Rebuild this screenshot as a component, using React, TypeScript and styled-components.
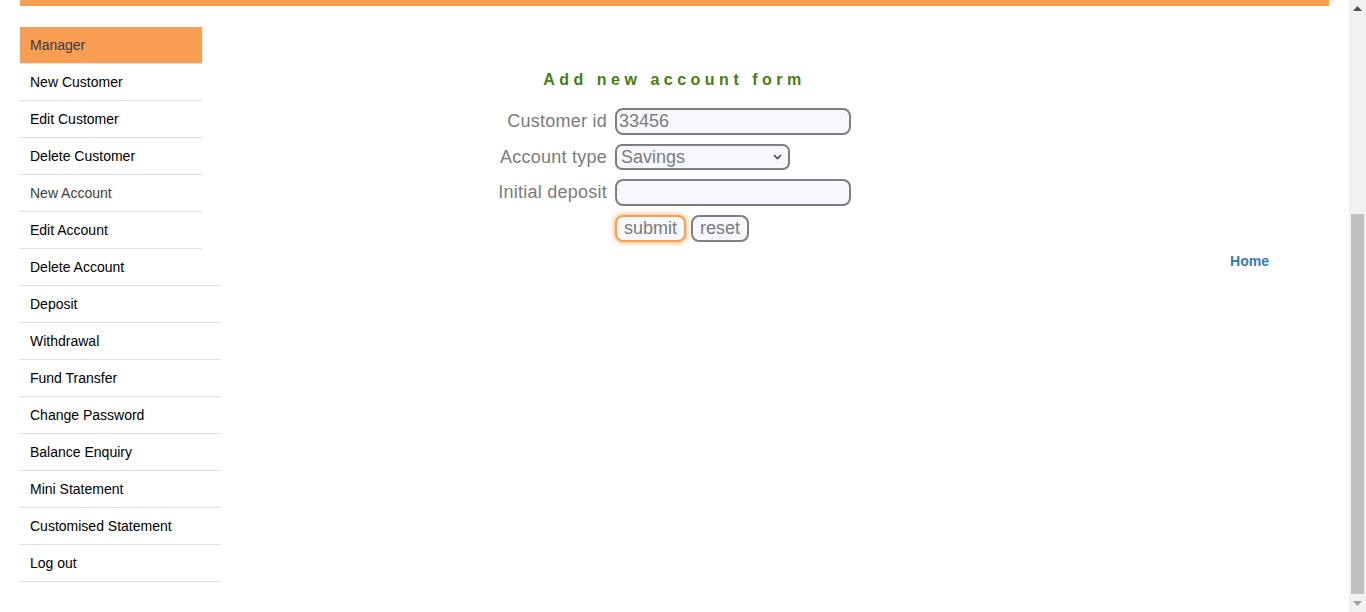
import React from 'react'
import styled, { createGlobalStyle } from 'styled-components'

const ORANGE = '#f99d52'
const FIELD_BG = '#f6f8fe'
const FIELD_BORDER = '#7f7f7f'
const GRAY_TEXT = '#7b7b7b'

const GlobalStyle = createGlobalStyle`
  html, body {
    margin: 0;
    padding: 0;
    background: #ffffff;
  }
  body {
    font-family: 'Liberation Sans', Arial, Helvetica, sans-serif;
  }
`

const Frame = styled.div`
  display: flex;
  height: 612px;
  overflow: hidden;
  background: #ffffff;
`

const Page = styled.div`
  flex: 1;
  min-width: 0;
  padding: 0 20px;
`

const TopBar = styled.div`
  height: 6px;
  background: ${ORANGE};
`

const Body = styled.div`
  display: flex;
  margin-top: 21px;
`

const Sidebar = styled.nav`
  width: 200px;
  flex-shrink: 0;
  display: flex;
  flex-direction: column;
  align-items: flex-start;
`

const MenuHead = styled.div`
  box-sizing: border-box;
  width: 182px;
  height: 37px;
  padding: 0 0 1px 10px;
  display: flex;
  align-items: center;
  background: ${ORANGE};
  border-bottom: 1px solid #e0e0e0;
  color: #3a3a3a;
  font-size: 14px;
`

const MenuLink = styled.a<{ $wide?: boolean; $muted?: boolean }>`
  box-sizing: border-box;
  width: ${({ $wide }) => ($wide ? '200px' : '182px')};
  height: 37px;
  padding-left: 10px;
  display: flex;
  align-items: center;
  border-bottom: 1px solid #e0e0e0;
  color: ${({ $muted }) => ($muted ? '#404040' : '#000000')};
  font-size: 14px;
  text-decoration: none;
  cursor: pointer;
`

const Main = styled.main`
  flex: 1;
  min-width: 0;
  display: flex;
  flex-direction: column;
`

const FormArea = styled.section`
  margin-right: 200px;
  padding-top: 44px;
  display: flex;
  flex-direction: column;
  align-items: center;
`

const Title = styled.h2`
  margin: 0 0 19px 0;
  font-size: 16px;
  line-height: 18px;
  font-weight: bold;
  letter-spacing: 4.5px;
  color: #4a7c10;
`

const FormGrid = styled.form`
  display: grid;
  grid-template-columns: 109px 236px;
  column-gap: 8px;
  row-gap: 9px;
  align-items: center;
`

const Label = styled.label`
  justify-self: end;
  white-space: nowrap;
  font-size: 18px;
  letter-spacing: 0.25px;
  color: ${GRAY_TEXT};
`

const TextInput = styled.input`
  box-sizing: border-box;
  justify-self: start;
  width: 236px;
  height: 27px;
  padding: 0 2px;
  border: 2px solid ${FIELD_BORDER};
  border-radius: 8px;
  background: ${FIELD_BG};
  font-family: inherit;
  font-size: 18px;
  color: ${GRAY_TEXT};
  outline: none;
`

const SelectWrap = styled.div`
  position: relative;
  justify-self: start;
  width: 175px;
  height: 26px;
`

const Select = styled.select`
  box-sizing: border-box;
  width: 100%;
  height: 100%;
  padding: 0 20px 0 4px;
  border: 2px solid ${FIELD_BORDER};
  border-radius: 7px;
  background: ${FIELD_BG};
  font-family: inherit;
  font-size: 18px;
  color: ${GRAY_TEXT};
  appearance: none;
  outline: none;
`

const Chevron = styled.svg`
  position: absolute;
  right: 8px;
  top: 10px;
  pointer-events: none;
`

const ButtonRow = styled.div`
  grid-column: 2;
  display: flex;
  gap: 5px;
`

const Button = styled.button<{ $focused?: boolean }>`
  box-sizing: border-box;
  height: 27px;
  padding: 0 7px;
  border: 2px solid ${({ $focused }) => ($focused ? '#f9a04e' : FIELD_BORDER)};
  border-radius: 8px;
  background: ${FIELD_BG};
  box-shadow: ${({ $focused }) => ($focused ? '0 0 5px 1px rgba(249, 160, 78, 0.75)' : 'none')};
  font-family: inherit;
  font-size: 18px;
  line-height: 21px;
  color: ${GRAY_TEXT};
  cursor: pointer;
`

const HomeRow = styled.div`
  margin-top: 10px;
  padding-right: 60px;
  text-align: right;
`

const HomeLink = styled.a`
  font-size: 14px;
  line-height: 16px;
  font-weight: bold;
  color: #337ab7;
  text-decoration: none;
`

const ScrollTrack = styled.div`
  width: 17px;
  flex-shrink: 0;
  display: flex;
  flex-direction: column;
  background: #f1f1f1;
`

const ScrollButton = styled.div`
  height: 17px;
  display: flex;
  align-items: center;
  justify-content: center;
`

const ScrollGutter = styled.div`
  flex: 1;
  display: flex;
  flex-direction: column;
  justify-content: flex-end;
  padding: 0 2px 1px 2px;
`

const ScrollThumb = styled.div`
  height: 380px;
  background: #c1c1c1;
`

const topMenu = ['New Customer', 'Edit Customer', 'Delete Customer', 'New Account', 'Edit Account']
const bottomMenu = [
  'Delete Account',
  'Deposit',
  'Withdrawal',
  'Fund Transfer',
  'Change Password',
  'Balance Enquiry',
  'Mini Statement',
  'Customised Statement',
  'Log out'
]

export default function App() {
  return (
    <>
      <GlobalStyle />
      <Frame>
        <Page>
          <TopBar />
          <Body>
            <Sidebar>
              <MenuHead>Manager</MenuHead>
              {topMenu.map(item => (
                <MenuLink key={item} $muted={item === 'New Account'}>
                  {item}
                </MenuLink>
              ))}
              {bottomMenu.map(item => (
                <MenuLink key={item} $wide>
                  {item}
                </MenuLink>
              ))}
            </Sidebar>

            <Main>
              <FormArea>
                <Title>Add new account form</Title>
                <FormGrid onSubmit={e => e.preventDefault()}>
                  <Label htmlFor="cusid">Customer id</Label>
                  <TextInput id="cusid" defaultValue="33456" />

                  <Label htmlFor="acctype">Account type</Label>
                  <SelectWrap>
                    <Select id="acctype" defaultValue="Savings">
                      <option>Savings</option>
                      <option>Current</option>
                    </Select>
                    <Chevron width="9" height="6" viewBox="0 0 9 6">
                      <path d="M1 1 L4.5 4.5 L8 1" fill="none" stroke="#4a4a4a" strokeWidth="1.6" />
                    </Chevron>
                  </SelectWrap>

                  <Label htmlFor="inideposit">Initial deposit</Label>
                  <TextInput id="inideposit" />

                  <ButtonRow>
                    <Button type="submit" $focused>
                      submit
                    </Button>
                    <Button type="reset">reset</Button>
                  </ButtonRow>
                </FormGrid>
              </FormArea>
              <HomeRow>
                <HomeLink href="#">Home</HomeLink>
              </HomeRow>
            </Main>
          </Body>
        </Page>

        <ScrollTrack>
          <ScrollButton>
            <svg width="9" height="5" viewBox="0 0 9 5">
              <path d="M0 5 L4.5 0 L9 5 Z" fill="#505050" />
            </svg>
          </ScrollButton>
          <ScrollGutter>
            <ScrollThumb />
          </ScrollGutter>
          <ScrollButton>
            <svg width="9" height="5" viewBox="0 0 9 5">
              <path d="M0 0 L4.5 5 L9 0 Z" fill="#a3a3a3" />
            </svg>
          </ScrollButton>
        </ScrollTrack>
      </Frame>
    </>
  )
}
